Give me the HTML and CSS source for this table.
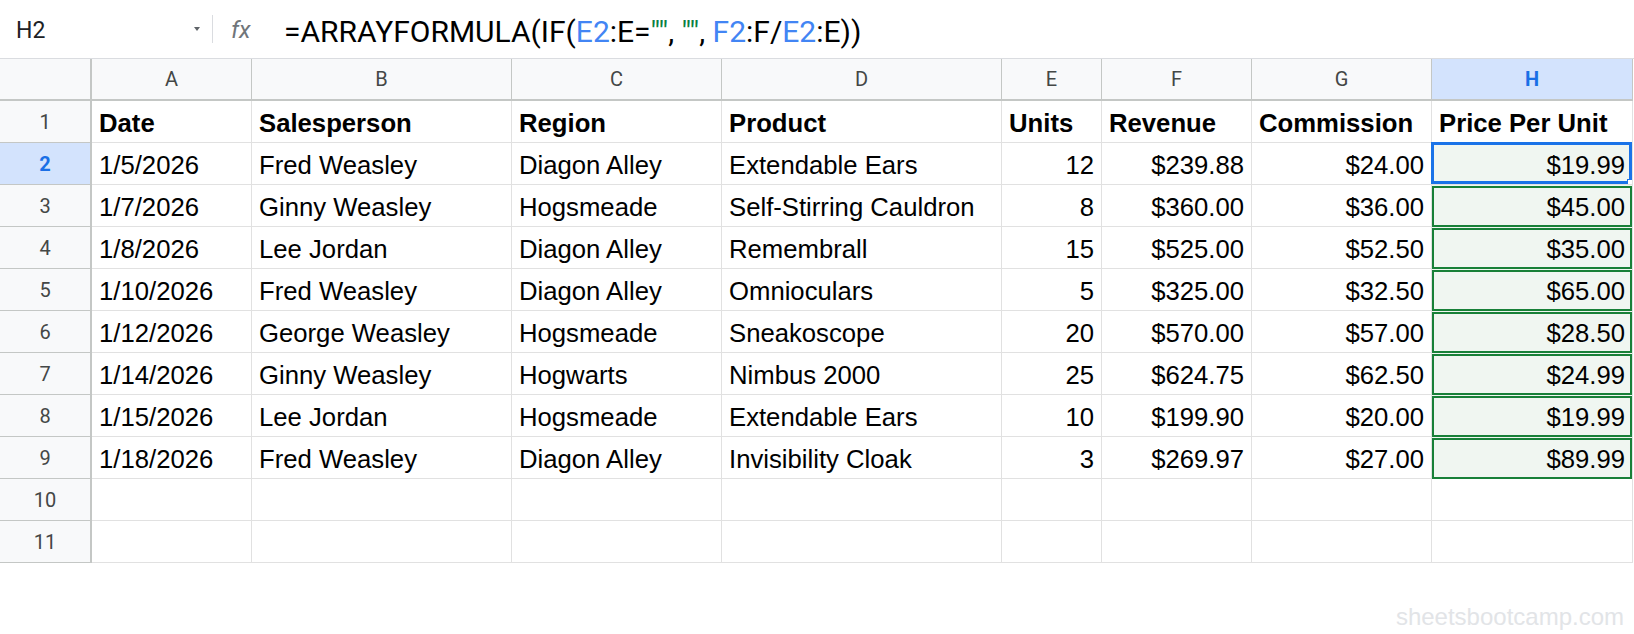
FILE: index.html
```html
<!DOCTYPE html>
<html lang="en">
<head>
<meta charset="utf-8">
<title>Sheet</title>
<link rel="stylesheet" href="styles.css">
</head>
<body>
<div class="formula-bar">
  <div class="name-box">
    <span class="name">H2</span>
    <svg class="caret" width="6" height="4" viewBox="0 0 6 4"><path d="M0 0 L6 0 L3 4 Z" fill="#5f6368"/></svg>
  </div>
  <div class="sep"></div>
  <div class="fx">fx</div>
  <div class="formula">=ARRAYFORMULA(IF(<span class="ref">E2</span>:E=<span class="str">""</span>, <span class="str">""</span>, <span class="ref">F2</span>:F/<span class="ref">E2</span>:E))</div>
</div>

<div class="sheet">
  <div class="corner"></div>
  <div class="colhead">A</div>
  <div class="colhead">B</div>
  <div class="colhead">C</div>
  <div class="colhead">D</div>
  <div class="colhead">E</div>
  <div class="colhead">F</div>
  <div class="colhead">G</div>
  <div class="colhead sel">H</div>

  <div class="rowhead">1</div>
  <div class="cell b">Date</div>
  <div class="cell b">Salesperson</div>
  <div class="cell b">Region</div>
  <div class="cell b">Product</div>
  <div class="cell b">Units</div>
  <div class="cell b">Revenue</div>
  <div class="cell b">Commission</div>
  <div class="cell b">Price Per Unit</div>

  <div class="rowhead sel">2</div>
  <div class="cell">1/5/2026</div>
  <div class="cell">Fred Weasley</div>
  <div class="cell">Diagon Alley</div>
  <div class="cell">Extendable Ears</div>
  <div class="cell n">12</div>
  <div class="cell n">$239.88</div>
  <div class="cell n">$24.00</div>
  <div class="cell n arr active">$19.99<span class="handle"></span></div>

  <div class="rowhead">3</div>
  <div class="cell">1/7/2026</div>
  <div class="cell">Ginny Weasley</div>
  <div class="cell">Hogsmeade</div>
  <div class="cell">Self-Stirring Cauldron</div>
  <div class="cell n">8</div>
  <div class="cell n">$360.00</div>
  <div class="cell n">$36.00</div>
  <div class="cell n arr spill">$45.00</div>

  <div class="rowhead">4</div>
  <div class="cell">1/8/2026</div>
  <div class="cell">Lee Jordan</div>
  <div class="cell">Diagon Alley</div>
  <div class="cell">Remembrall</div>
  <div class="cell n">15</div>
  <div class="cell n">$525.00</div>
  <div class="cell n">$52.50</div>
  <div class="cell n arr spill">$35.00</div>

  <div class="rowhead">5</div>
  <div class="cell">1/10/2026</div>
  <div class="cell">Fred Weasley</div>
  <div class="cell">Diagon Alley</div>
  <div class="cell">Omnioculars</div>
  <div class="cell n">5</div>
  <div class="cell n">$325.00</div>
  <div class="cell n">$32.50</div>
  <div class="cell n arr spill">$65.00</div>

  <div class="rowhead">6</div>
  <div class="cell">1/12/2026</div>
  <div class="cell">George Weasley</div>
  <div class="cell">Hogsmeade</div>
  <div class="cell">Sneakoscope</div>
  <div class="cell n">20</div>
  <div class="cell n">$570.00</div>
  <div class="cell n">$57.00</div>
  <div class="cell n arr spill">$28.50</div>

  <div class="rowhead">7</div>
  <div class="cell">1/14/2026</div>
  <div class="cell">Ginny Weasley</div>
  <div class="cell">Hogwarts</div>
  <div class="cell">Nimbus 2000</div>
  <div class="cell n">25</div>
  <div class="cell n">$624.75</div>
  <div class="cell n">$62.50</div>
  <div class="cell n arr spill">$24.99</div>

  <div class="rowhead">8</div>
  <div class="cell">1/15/2026</div>
  <div class="cell">Lee Jordan</div>
  <div class="cell">Hogsmeade</div>
  <div class="cell">Extendable Ears</div>
  <div class="cell n">10</div>
  <div class="cell n">$199.90</div>
  <div class="cell n">$20.00</div>
  <div class="cell n arr spill">$19.99</div>

  <div class="rowhead">9</div>
  <div class="cell">1/18/2026</div>
  <div class="cell">Fred Weasley</div>
  <div class="cell">Diagon Alley</div>
  <div class="cell">Invisibility Cloak</div>
  <div class="cell n">3</div>
  <div class="cell n">$269.97</div>
  <div class="cell n">$27.00</div>
  <div class="cell n arr spill">$89.99</div>

  <div class="rowhead">10</div>
  <div class="cell"></div><div class="cell"></div><div class="cell"></div><div class="cell"></div>
  <div class="cell"></div><div class="cell"></div><div class="cell"></div><div class="cell"></div>

  <div class="rowhead">11</div>
  <div class="cell"></div><div class="cell"></div><div class="cell"></div><div class="cell"></div>
  <div class="cell"></div><div class="cell"></div><div class="cell"></div><div class="cell"></div>
</div>

<div class="footer">sheetsbootcamp.com</div>
</body>
</html>
```

FILE: styles.css
```css
* { box-sizing: border-box; }

html, body {
  margin: 0;
  padding: 0;
  background: #ffffff;
}

body {
  width: 1634px;
  height: 634px;
  overflow: hidden;
  font-family: "Liberation Sans", Arial, sans-serif;
}

/* ---------- formula bar ---------- */
.formula-bar {
  height: 58px;
  display: flex;
  align-items: center;
}

.name-box {
  width: 212px;
  display: flex;
  align-items: center;
  padding-left: 16px;
  padding-right: 12px;
}

.name {
  flex: 1;
  font-family: Roboto, "Liberation Sans", sans-serif;
  font-size: 23px;
  color: #202124;
  padding-top: 2px;
}

.caret {
  display: block;
}

.sep {
  width: 1px;
  height: 28px;
  background: #dadce0;
}

.fx {
  width: 71px;
  padding-left: 18px;
  font-family: Roboto, "Liberation Sans", sans-serif;
  font-style: italic;
  font-size: 24px;
  color: #70757a;
  padding-top: 2px;
}

.formula {
  font-family: Roboto, "Liberation Sans", sans-serif;
  font-size: 30px;
  color: #000;
  white-space: nowrap;
  padding-top: 4px;
}

.ref { color: #4285f4; }
.str { color: #0b8043; }

/* ---------- grid ---------- */
.sheet {
  display: grid;
  grid-template-columns: 92px 160px 260px 210px 280px 100px 150px 180px 201px;
  grid-auto-rows: 42px;
  border-top: 1px solid #dadce0;
}

.corner,
.colhead,
.rowhead {
  background: #f8f9fa;
  font-family: Roboto, "Liberation Sans", sans-serif;
  font-size: 20px;
  color: #444746;
  display: flex;
  align-items: center;
  justify-content: center;
}

.corner,
.colhead {
  border-bottom: 2px solid #c4c7c5;
  border-right: 1px solid #c4c7c5;
}

.rowhead {
  border-right: 2px solid #c4c7c5;
  border-bottom: 1px solid #c4c7c5;
}

.corner { border-right: 2px solid #c4c7c5; }

.colhead.sel,
.rowhead.sel {
  background: #d3e3fd;
  color: #1a6fe6;
  font-weight: 700;
}

.cell {
  position: relative;
  border-right: 1px solid #e1e1e1;
  border-bottom: 1px solid #e1e1e1;
  font-size: 25.7px;
  color: #000;
  padding: 3px 7px 0 7px;
  display: flex;
  align-items: center;
  white-space: nowrap;
  overflow: visible;
}

.cell.b { font-weight: 700; }

.cell.n { justify-content: flex-end; }

.cell.arr { background: #f0f6f1; }

.cell.spill::after {
  content: "";
  position: absolute;
  top: 1px;
  left: 0;
  right: 0;
  bottom: -1px;
  border: 2px solid #188038;
  pointer-events: none;
}

.cell.active::after {
  content: "";
  position: absolute;
  top: -1px;
  left: -1px;
  right: 0;
  bottom: 0;
  border: 3px solid #1a73e8;
  pointer-events: none;
}

.handle {
  position: absolute;
  right: 0;
  bottom: 0;
  width: 5px;
  height: 5px;
  background: #ffffff;
  z-index: 2;
  border-left: 1px solid #1a73e8;
  border-top: 1px solid #1a73e8;
}

/* ---------- footer watermark ---------- */
.footer {
  text-align: right;
  padding-right: 10px;
  padding-top: 40px;
  font-size: 24px;
  color: #e2e4e7;
}
```
